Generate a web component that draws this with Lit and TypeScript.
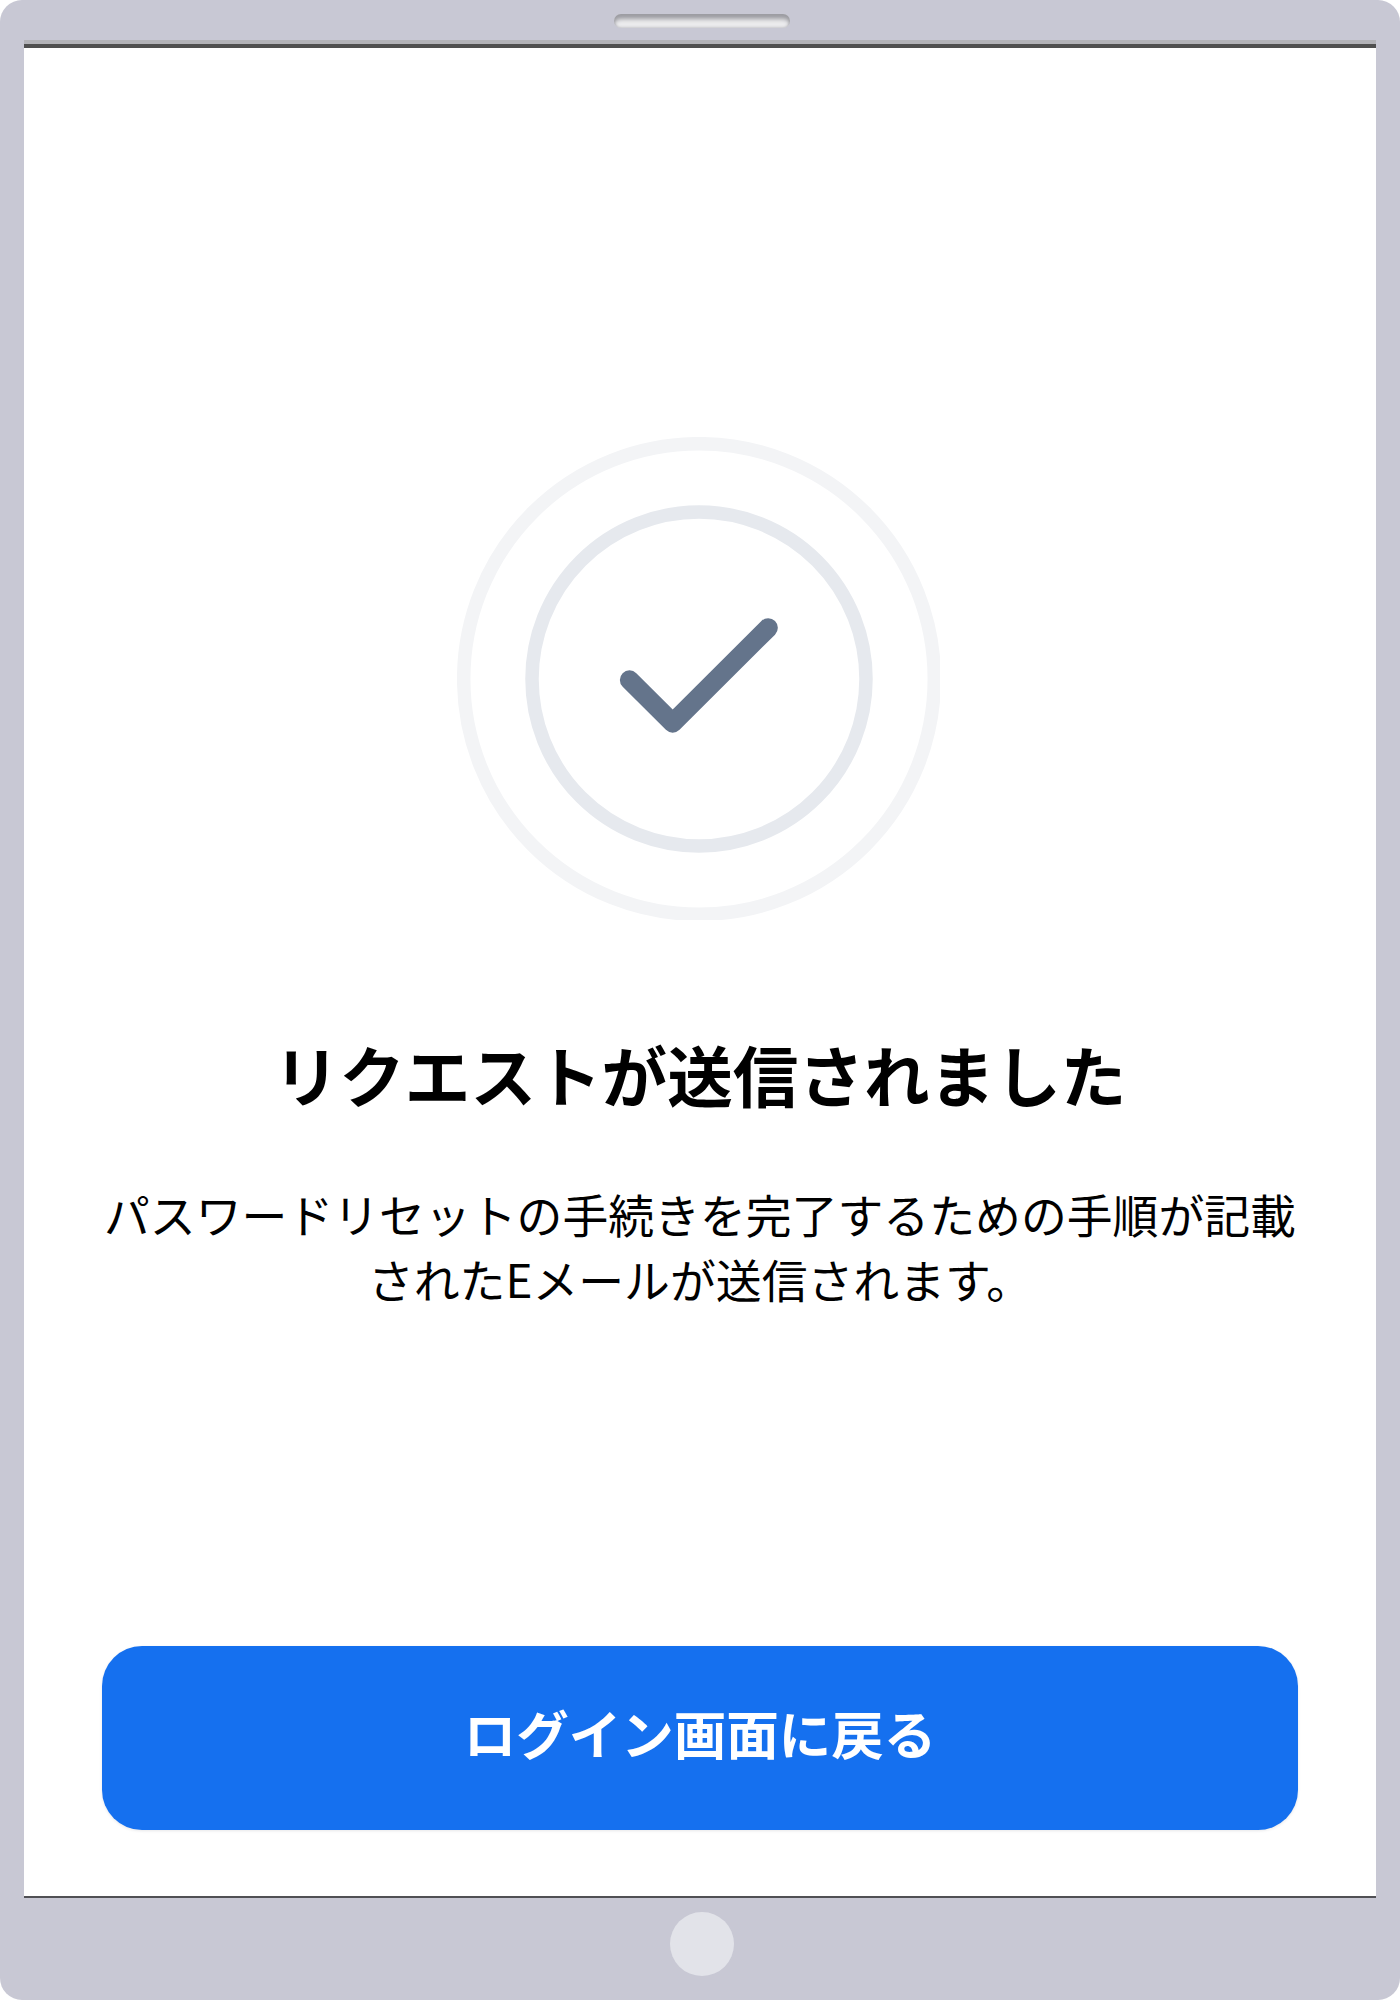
import { LitElement, html, css } from 'lit';
import { customElement } from 'lit/decorators.js';

@customElement('app-root')
export class AppRoot extends LitElement {
  static styles = css`
    :host {
      display: block;
      width: 1400px;
      height: 2000px;
      background: #fff;
      font-family: 'Noto Sans CJK JP', 'Noto Sans', sans-serif;
    }
    .frame {
      display: flex;
      flex-direction: column;
      height: 100%;
      box-sizing: border-box;
      padding: 0 23px;
      background: #c8c8d4;
      border-radius: 22px;
    }
    .top-bar {
      flex: none;
      display: flex;
      justify-content: center;
      height: 40px;
      padding-top: 14px;
      box-sizing: border-box;
    }
    .speaker {
      width: 176px;
      height: 14px;
      border-radius: 7px;
      background: #ebebed;
      box-shadow: inset 0 6px 4px -1px #9c9ca2, inset 0 0 3px #a8a8ae;
      margin-left: 4px;
    }
    .screen {
      flex: 1;
      display: flex;
      flex-direction: column;
      align-items: center;
      background: #fff;
      border-top: 4px solid #b3b3b8;
      box-shadow: inset 0 4px 0 #505050;
      border-bottom: 2px solid #505054;
      padding: 393px 79px 66px 79px;
      box-sizing: border-box;
      min-height: 0;
      clip-path: inset(0 1px 0 1px);
    }
    .rings {
      display: block;
      flex: none;
      margin-left: -4px;
    }
    h1 {
      margin: 106px 0 0;
      font-size: 65.6px;
      line-height: 96px;
      font-weight: 700;
      color: #000;
      text-align: center;
    }
    p {
      margin: 59px 0 0;
      width: 100%;
      font-size: 45.85px;
      line-height: 65px;
      font-weight: 400;
      color: #000;
      text-align: center;
    }
    button {
      margin-top: auto;
      flex: none;
      width: 100%;
      height: 184px;
      padding: 0 0 12px;
      border: none;
      border-radius: 40px;
      background: #1570ef;
      color: #fff;
      font: inherit;
      font-size: 52.5px;
      font-weight: 700;
      box-shadow: 0 1px 3px rgba(16, 24, 40, 0.1);
    }
    .bottom-bar {
      flex: 0 0 102px;
      display: flex;
      justify-content: center;
      padding-top: 14px;
      box-sizing: border-box;
    }
    .home {
      width: 64px;
      height: 64px;
      border-radius: 50%;
      background: #e2e3e9;
      margin-left: 4px;
    }
  `;

  render() {
    return html`
      <div class="frame">
        <div class="top-bar"><div class="speaker"></div></div>
        <main class="screen">
          <svg class="rings" width="483" height="483" viewBox="0 0 483 483" fill="none">
            <circle cx="242" cy="242" r="235.3" stroke="#f3f4f6" stroke-width="13.5"></circle>
            <circle cx="242" cy="242" r="167" stroke="#e6e9ee" stroke-width="13.5"></circle>
            <path
              d="M172.5 243L215.7 286L311.2 190.8"
              stroke="#64748b"
              stroke-width="19.3"
              stroke-linecap="round"
              stroke-linejoin="round"
            ></path>
          </svg>
          <h1>リクエストが送信されました</h1>
          <p>パスワードリセットの手続きを完了するための手順が記載されたEメールが送信されます。</p>
          <button>ログイン画面に戻る</button>
        </main>
        <div class="bottom-bar"><div class="home"></div></div>
      </div>
    `;
  }
}
